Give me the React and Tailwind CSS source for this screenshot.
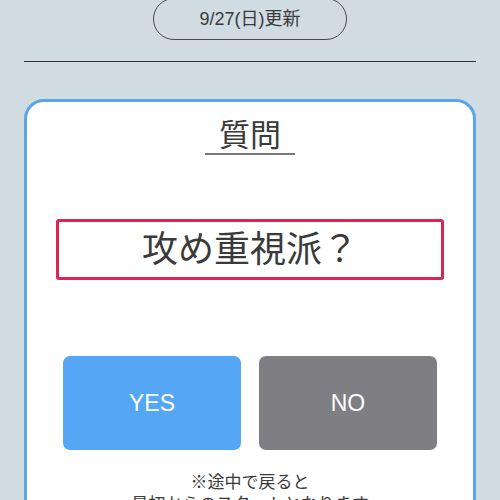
import React from "react";

const App = () => {
  return (
    <div
      className="w-[500px] h-[500px] overflow-hidden bg-[#d0dbe2] text-[#3a3a3a]"
      style={{ fontFamily: '"Liberation Sans", "Noto Sans CJK JP", sans-serif' }}
    >
      <div className="flex flex-col items-center -mt-[2px]">
        {/* Date pill */}
        <div className="w-[194px] h-[42px] rounded-full border border-[#4a4a4a] flex items-center justify-center text-[18px] leading-none">
          9/27(日)更新
        </div>
      </div>

      <div className="mx-[24px] mt-[21px] h-px bg-[#333]" />

      {/* Question card */}
      <div className="mx-[24px] mt-[37px] h-[460px] rounded-[20px] border-[3px] border-[#5aa5ea] bg-white flex flex-col items-center">
        <div className="mt-[17px] px-[14px] border-b-2 border-[#777] text-[31px] leading-[34px]">
          質問
        </div>

        <div className="mt-[64px] w-[388px] h-[61px] rounded-[3px] border-[3px] border-[#dc2550] flex items-center justify-center text-[36px] leading-none">
          攻め重視派？
        </div>

        <div className="mt-[76px] flex gap-[18px]">
          <button className="w-[178px] h-[94px] rounded-[7px] bg-[#55a7f5] text-white text-[23px] flex items-center justify-center">
            YES
          </button>
          <button className="w-[178px] h-[94px] rounded-[7px] bg-[#7f7e83] text-white text-[23px] flex items-center justify-center">
            NO
          </button>
        </div>

        <div className="mt-[22px] text-center text-[17px] leading-[22px]">
          ※途中で戻ると
          <br />
          最初からのスタートとなります
        </div>
      </div>
    </div>
  );
};

export default App;
